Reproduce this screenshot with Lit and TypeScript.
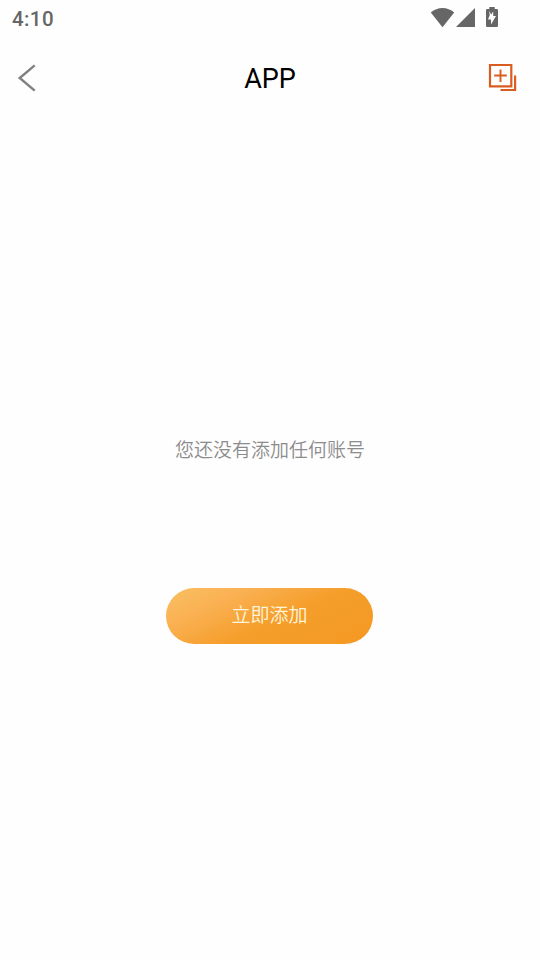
import { LitElement, html, css } from "lit";
import { customElement } from "lit/decorators.js";

@customElement("app-root")
export class AppRoot extends LitElement {
  static styles = css`
    :host {
      display: flex;
      flex-direction: column;
      height: 960px;
      background: #fefefe;
      font-family: Roboto, "Noto Sans CJK SC", sans-serif;
      overflow: hidden;
    }
    svg {
      display: block;
    }
    .status {
      height: 38px;
      display: flex;
      align-items: flex-start;
      justify-content: space-between;
      padding: 0 41px 0 12px;
      color: #666;
      font-size: 20.5px;
      font-weight: 500;
      letter-spacing: 0.4px;
      line-height: 38px;
    }
    .indicators {
      margin-top: 6px;
    }
    .header {
      height: 80px;
      display: grid;
      grid-template-columns: 60px 1fr 60px;
      align-items: center;
    }
    .title {
      margin: 0;
      padding-top: 2px;
      text-align: center;
      font-size: 27px;
      font-weight: 400;
      line-height: 36px;
      color: #000;
    }
    .back,
    .add {
      border: 0;
      padding: 0;
      background: none;
    }
    .content {
      flex: 1;
      display: flex;
      flex-direction: column;
      align-items: center;
    }
    .empty {
      margin: 319px 0 0;
      height: 28px;
      line-height: 28px;
      font-size: 19px;
      font-weight: 350;
      color: #8c8c8c;
    }
    .primary {
      margin: 123px 1px 0 0;
      width: 207px;
      height: 56px;
      border: 0;
      border-radius: 28px;
      padding: 0;
      font: 350 19px/28px Roboto, "Noto Sans CJK SC", sans-serif;
      color: #fff5da;
      background: linear-gradient(155deg, #f8c064 0%, #fab153 25%, #f59e2b 55%, #f49822 100%);
    }
  `;

  render() {
    return html`
      <div class="status">
        <span>4:10</span>
        <svg class="indicators" width="69" height="22" viewBox="430 6 69 22" fill="#666">
          <path d="M442.500 27.200 L430.800 12.600 Q436 8 442.500 8 Q449 8 454.200 12.600Z" />
          <path d="M475 8V27H456Z" />
          <path
            fill-rule="evenodd"
            d="M489.300 7H494.700V9H496.700Q498 9 498 10.300V25.700Q498 27 496.700 27H487.300Q486 27 486 25.700V10.300Q486 9 487.300 9H489.300Z M489 11L489.800 15L488 19.500H491V24.500L496 16H493.200V11.200L491.300 14.500Z"
          />
        </svg>
      </div>
      <div class="header">
        <button class="back" aria-label="返回">
          <svg width="60" height="30" viewBox="0 63 60 30" fill="none" stroke="#808080" stroke-width="2.400">
            <path d="M34.700 65.300L19.700 78L34.700 90.700" />
          </svg>
        </button>
        <h1 class="title">APP</h1>
        <button class="add" aria-label="添加">
          <svg width="60" height="30" viewBox="480 63 60 30" fill="none" stroke="#d95c20" stroke-width="2.200">
            <path d="M490 65H511.300V86.300H490Z M515.100 75.500V90H500.500" />
            <path d="M494.200 75.500H506.800 M500.500 69.500V82" stroke-width="1.900" />
          </svg>
        </button>
      </div>
      <div class="content">
        <p class="empty">您还没有添加任何账号</p>
        <button class="primary">立即添加</button>
      </div>
    `;
  }
}
